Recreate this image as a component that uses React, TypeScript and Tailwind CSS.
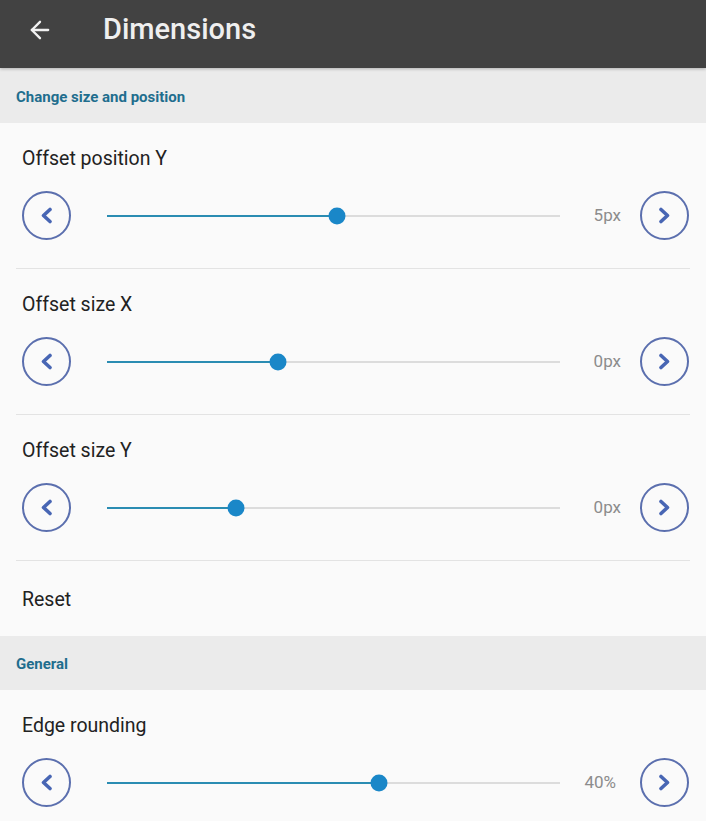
import { ArrowLeft } from "lucide-react";

type SliderItem = {
  label: string;
  value: string;
  pos: number;
  valuePad?: string;
};

const sizeItems: SliderItem[] = [
  { label: "Offset position Y", value: "5px", pos: 0.508 },
  { label: "Offset size X", value: "0px", pos: 0.377 },
  { label: "Offset size Y", value: "0px", pos: 0.285 },
];

const generalItems: SliderItem[] = [
  { label: "Edge rounding", value: "40%", pos: 0.6, valuePad: "pr-[5px]" },
];

const StepButton = ({ dir }: { dir: "left" | "right" }) => (
  <button
    type="button"
    className="flex h-[49px] w-[49px] shrink-0 items-center justify-center rounded-full border-2 border-[#5b6fae]"
  >
    <svg viewBox="0 0 13 17" className="h-[17px] w-[13px]" fill="none" stroke="#4866b4" strokeWidth="3.6" strokeLinecap="round" strokeLinejoin="round">
      {dir === "left" ? <path d="M10 2.5 3.5 8.5l6.5 6" /> : <path d="M3 2.5l6.5 6-6.5 6" />}
    </svg>
  </button>
);

const SectionHeader = ({ title, h }: { title: string; h: string }) => (
  <div className={`flex items-center bg-[#ebebeb] pl-4 pt-[3px] ${h}`}>
    <span className="text-[15px] font-bold text-[#1f6e8e]">{title}</span>
  </div>
);

const SliderRow = ({ item }: { item: SliderItem }) => (
  <div className="mx-4 border-b border-[#e3e3e3] pl-[6px] pt-6 pb-[28px]">
    <p className="text-[19.5px] leading-6 text-[#222]">{item.label}</p>
    <div className="mt-5 flex h-[49px] items-center">
      <StepButton dir="left" />
      <div className="relative ml-[36px] h-[2px] w-[453px] bg-[#dcdcdc]">
        <div className="absolute left-0 top-0 h-[2px] bg-[#2a8cb2]" style={{ width: `${item.pos * 100}%` }} />
        <div
          className="absolute top-1/2 h-[17px] w-[17px] -translate-x-1/2 -translate-y-1/2 rounded-full bg-[#1a87c8]"
          style={{ left: `${item.pos * 100}%` }}
        />
      </div>
      <span className={`w-[61px] text-right text-[17px] text-[#8c8c8c] ${item.valuePad ?? ""}`}>
        {item.value}
      </span>
      <div className="ml-[19px]">
        <StepButton dir="right" />
      </div>
    </div>
  </div>
);

export default function App() {
  return (
    <div className="min-h-[821px] w-[706px] overflow-hidden bg-[#fafafa] font-['Roboto',sans-serif]">
      <header className="relative z-10 flex h-[68px] items-center bg-[#424242] pb-[8px] shadow-[0_1px_3px_rgba(0,0,0,0.25)]">
        <ArrowLeft className="ml-[26px] h-[28px] w-[28px] text-[#f2f2f2]" strokeWidth={2} />
        <h1 className="ml-[49px] text-[29px] font-medium text-[#efefef]">Dimensions</h1>
      </header>

      <SectionHeader title="Change size and position" h="h-[55px]" />
      {sizeItems.map((item) => (
        <SliderRow key={item.label} item={item} />
      ))}
      <div className="flex h-[75px] items-center pl-[22px] pt-[2px]">
        <span className="text-[19.5px] text-[#222]">Reset</span>
      </div>

      <SectionHeader title="General" h="h-[54px]" />
      {generalItems.map((item) => (
        <SliderRow key={item.label} item={item} />
      ))}
    </div>
  );
}
